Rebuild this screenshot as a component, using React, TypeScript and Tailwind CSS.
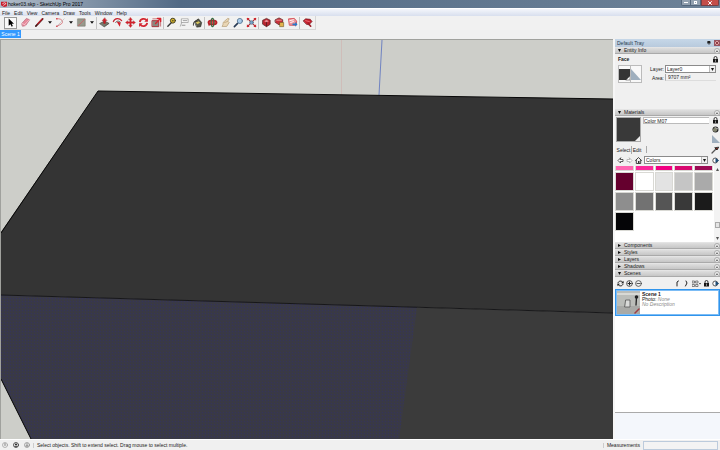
import React from "react";

type Kids = { children?: React.ReactNode };

function Icon({ children, className = "size-[11px]", box = "0 0 12 12" }: Kids & { className?: string; box?: string }) {
  return (
    <svg viewBox={box} className={`shrink-0 ${className}`} fill="none" strokeLinecap="round" strokeLinejoin="round" aria-hidden="true">
      {children}
    </svg>
  );
}

function Tool({ label, children, pressed }: Kids & { label: string; pressed?: boolean }) {
  return (
    <button
      aria-label={label}
      className={`flex h-3 w-[13px] shrink-0 items-center justify-center ${pressed ? "border border-[#999] bg-[#f9f9f9]" : ""}`}
    >
      <Icon>{children}</Icon>
    </button>
  );
}

function Drop({ label }: { label: string }) {
  return (
    <button aria-label={label} className="flex h-3 w-2 shrink-0 items-center justify-center">
      <Icon className="h-[3px] w-[4px]" box="0 0 5 3"><path d="M0 0h5L2.500 3z" fill="#111" /></Icon>
    </button>
  );
}

function Sep() {
  return <div className="mr-px h-3 w-px shrink-0 bg-[#c3c3c3]" />;
}

function Toolbar() {
  return (
    <div className="flex h-[14px] items-center bg-[#f1f1f1] pl-1">
      <div className="flex h-[14px] items-center border-r border-b border-[#d6d6d6] pr-px">
        <Tool label="Select" pressed>
          <path d="M4 1.500v8l2-1.700 1.300 2.700 1.300-.7-1.300-2.500h2.500z" fill="#000" />
        </Tool>
        <div className="w-[2px]" />
        <Tool label="Eraser">
          <path d="M2 7l5-5.500 3.500 1.500L6 9.500 3 10z" fill="#e78a9b" stroke="#a94c61" strokeWidth=".6" />
          <path d="M2 7l3 1.300L6 9.500M5 8.300L10.300 3" stroke="#fbd0d7" strokeWidth=".8" />
        </Tool>
        <div className="w-px" />
        <Tool label="Line">
          <path d="M2 10L9.500 2" stroke="#431313" strokeWidth="1.800" />
          <path d="M4 7.500L9 2" stroke="#c9202c" strokeWidth="1.200" />
        </Tool>
        <Drop label="Line tools" />
        <Tool label="Arc">
          <path d="M2 2c5-1 8 3 5 5.500L2.500 10" stroke="#cf5960" strokeWidth=".8" />
          <path d="M2 10L10 2" stroke="#b5aaaa" strokeWidth=".6" />
          <circle cx="2" cy="2" r=".8" fill="#d2232f" /><circle cx="2" cy="10" r=".8" fill="#d2232f" />
        </Tool>
        <Drop label="Arc tools" />
        <Tool label="Rectangle">
          <path d="M2 2h8v8H2z" fill="#98998b" stroke="#77786e" strokeWidth=".7" />
          <path d="M2.500 9.500l7-7" stroke="#c9656a" strokeWidth="1" />
        </Tool>
        <Drop label="Shape tools" />
        <Sep />
        <Tool label="Push/Pull">
          <path d="M1 7l5-2.500L11 7l-5 3.500z" fill="#77786b" stroke="#35352f" strokeWidth=".7" />
          <path d="M6 1L3.500 4H5v3h2V4h1.500z" fill="#d51d27" stroke="#8c1117" strokeWidth=".4" />
        </Tool>
        <Tool label="Offset">
          <path d="M1.500 5C3 1 8 .8 10.500 4" stroke="#c62531" strokeWidth="1.300" />
          <path d="M4 6c1-2 3.500-2 5-.5" stroke="#555" strokeWidth="1" />
          <path d="M5 5l4.500 1-1 4.500z" fill="#d2202b" />
        </Tool>
        <Tool label="Move">
          <path d="M6 .5l2 2.500H6.800v2.200H9V4l2.500 2L9 8V6.800H6.800V9H8l-2 2.500L4 9h1.200V6.800H3V8L.5 6 3 4v1.200h2.200V3H4z" fill="#d9222c" stroke="#99161e" strokeWidth=".3" />
        </Tool>
        <Tool label="Rotate">
          <path d="M2 5.500c.5-4 6-4.500 7.500-1.500M10 6.500c-.5 4-6 4.500-7.500 1.500" stroke="#d32631" strokeWidth="1.900" strokeLinecap="butt" />
          <path d="M10.800 1v4.300H6.900zM1.200 11V6.700h3.900z" fill="#d32631" />
        </Tool>
        <Tool label="Scale">
          <path d="M1.500 4h7v6.500h-7z" fill="#88887e" stroke="#a62a30" />
          <path d="M2 2h8.500v8" stroke="#b9484f" strokeWidth=".8" />
          <path d="M5 7l5-5M7 1.500h3.500V5" stroke="#d8232e" strokeWidth="1.500" />
        </Tool>
        <Sep />
        <Tool label="Tape Measure">
          <path d="M2 10l4-4" stroke="#333" strokeWidth="1.500" />
          <circle cx="7.500" cy="4" r="2.700" fill="#d6b52e" stroke="#3d3920" /><circle cx="7.500" cy="4" r=".8" fill="#3d3920" />
        </Tool>
        <Tool label="Text">
          <path d="M3 2h7v4H3zM3 6l-1.500 4" fill="#fff" stroke="#8d8d8d" strokeWidth=".7" />
          <path d="M4.500 4h4M3.500 9h3" stroke="#777" strokeWidth=".8" />
        </Tool>
        <Tool label="Paint Bucket">
          <path d="M3 5l4-3 3.500 4-1 4.500-4 .5z" fill="#55564b" stroke="#272721" strokeWidth=".7" />
          <path d="M1.500 9C1 4 5 3 7 6" stroke="#33332e" />
          <path d="M4 6l3-1.500 2 1.500-3 2z" fill="#d5c35b" />
        </Tool>
        <Sep />
        <Tool label="Orbit">
          <ellipse cx="6" cy="6" rx="4.500" ry="2.300" fill="#d8474e" stroke="#b82028" strokeWidth="1.800" />
          <ellipse cx="6" cy="6" rx="1.500" ry="4.500" stroke="#346b42" strokeWidth="1.200" />
          <path d="M1 7l3 1-2 2z" fill="#b82028" />
        </Tool>
        <Tool label="Pan">
          <path d="M2.500 10c2-2-.5-4 2.500-5.500L8.500 1.500 10 2 8.500 4.500 10 6 7.500 10z" fill="#ead7b6" stroke="#b69d76" strokeWidth=".8" />
          <path d="M5 6l3-1" stroke="#a98c66" strokeWidth=".6" />
        </Tool>
        <Tool label="Zoom">
          <path d="M1.500 10.500L5 7" stroke="#273a54" strokeWidth="1.800" />
          <circle cx="7.500" cy="4.300" r="2.800" fill="#a9cbea" stroke="#53718f" strokeWidth=".9" />
        </Tool>
        <Tool label="Zoom Extents">
          <path d="M1.500 1.500l9 9M10.500 1.500l-9 9" stroke="#a52c35" strokeWidth="1.200" />
          <path d="M1 1h3L1 4zM11 1v3L8 1zM1 11V8l3 3zM11 11H8l3-3z" fill="#d2212c" />
          <circle cx="6" cy="6" r="2" fill="#79a5c8" stroke="#44647e" strokeWidth=".6" />
        </Tool>
        <Sep />
        <Tool label="3D Warehouse">
          <path d="M2 3.500L6 1.500l4 2V8l-4 2.500L2 8z" fill="#b92630" stroke="#581b1e" strokeWidth=".8" />
          <path d="M3.500 4.500L6 3l2.500 1.500L6 6z" fill="#e78c92" /><path d="M6 6v4" stroke="#641c20" />
        </Tool>
        <Tool label="Share Model">
          <path d="M1.500 3l4-2 4 2v3l-4 2.500-4-2.500z" fill="#c9303a" stroke="#5d2022" strokeWidth=".8" />
          <path d="M3 3.500h5" stroke="#e99a9d" />
          <path d="M6.500 6h4v4.500h-4z" fill="#e2b44c" stroke="#775e26" strokeWidth=".7" />
        </Tool>
        <Tool label="Send to LayOut">
          <path d="M2 2l6-.5 2.500 3L10 9H3z" fill="#ec969b" stroke="#d3434c" strokeWidth=".9" />
          <path d="M3 4l4-1M4 6l3-1" stroke="#fff" />
          <path d="M6 7h3V5.500L11.500 8 9 10.500V9H6z" fill="#2878c8" />
        </Tool>
        <Sep />
        <Tool label="Extension Warehouse">
          <path d="M1.500 4L4 2l5 .5L11 5 7.500 8.500 5 8z" fill="#c61f2c" stroke="#671319" strokeWidth=".7" />
          <path d="M7 7l2.500 3" stroke="#9b2029" strokeWidth="1.800" /><path d="M4 4l4 1" stroke="#ec747c" />
        </Tool>
      </div>
    </div>
  );
}

function Model() {
  return (
    <svg viewBox="0 0 612 399" preserveAspectRatio="none" className="block h-full w-full" role="img" aria-label="3D model">
      <defs>
        <pattern id="dots" width="3" height="3" patternUnits="userSpaceOnUse">
          <rect width="3" height="3" fill="#393947" />
          <rect width="1" height="1" fill="#35345a" />
          <rect x="1" y="2" width="1" height="1" fill="#3b3b40" />
        </pattern>
      </defs>
      <rect width="612" height="399" fill="#cdcec9" />
      <path d="M340.500 0V55" stroke="#cfb9b5" strokeWidth=".8" />
      <path d="M381 0L378 55" stroke="#5870bf" strokeWidth=".8" />
      <path d="M97 51L612 59V273L0 255V192z" fill="#343434" />
      <path d="M0 255L612 273V399H30L0 339z" fill="#3b3b3b" />
      <path d="M0 255L416 267L398 399H30L0 339z" fill="url(#dots)" />
      <path d="M0 193L97 51L612 59M0 339L30 399" stroke="#080808" fill="none" />
      <path d="M0 255L612 273" stroke="#171719" />
    </svg>
  );
}

function Section({ title, open }: { title: string; open?: boolean }) {
  return (
    <h2 className="flex h-[7px] shrink-0 items-center border-y border-t-[#e4e4e4] border-b-[#aaa] bg-linear-to-b from-[#dedede] to-[#c6c6c6]">
      <button className="flex h-full flex-1 items-center gap-[3px] pl-[3px] text-left leading-[5px]" aria-expanded={!!open}>
        <Icon className="size-[3px]" box="0 0 4 4">
          <path d={open ? "M0 0h4L2 4z" : "M0 0l4 2-4 2z"} fill="#111" />
        </Icon>
        {title}
      </button>
      <button aria-label={`Close ${title}`} className="flex size-[6px] items-center justify-center rounded-full border border-[#aaa] bg-[#eee]">
        <Icon className="size-[2px]" box="0 0 2 2"><path d="M1 0l1 2H0z" fill="#555" /></Icon>
      </button>
    </h2>
  );
}

function Lock() {
  return (
    <Icon className="size-[7px]" box="0 0 7 7">
      <path d="M2 3V2a1.500 1.500 0 013 0v1" stroke="#222" strokeWidth=".9" />
      <path d="M1 3h5v3.500H1z" fill="#171717" /><path d="M3.500 4v1.500" stroke="#ddd" strokeWidth=".6" />
    </Icon>
  );
}

function Details() {
  return (
    <Icon className="size-[7px]" box="0 0 7 7">
      <circle cx="3.300" cy="3.500" r="2.500" fill="#fff" stroke="#333" strokeWidth=".8" />
      <path d="M3.500 1L7 3.500 3.500 6z" fill="#214f78" />
    </Icon>
  );
}

function Picker({ label, value, className }: { label: string; value: string; className: string }) {
  return (
    <span className={`grid h-[8px] items-center border border-[#8b8b8b] bg-white ${className}`}>
      <select aria-label={label} className="col-start-1 row-start-1 h-[6px] w-full appearance-none bg-transparent pl-px text-[5px] leading-[6px] outline-none">
        <option>{value}</option>
      </select>
      <span className="pointer-events-none col-start-1 row-start-1 flex h-[6px] w-[6px] items-center justify-center justify-self-end border-l border-[#bbb] bg-[#f1f1f1]">
        <Icon className="size-[3px]" box="0 0 4 4"><path d="M0 0h4L2 4z" fill="#111" /></Icon>
      </span>
    </span>
  );
}

function EntityInfo() {
  return (
    <section className="flex h-[55px] shrink-0 flex-col pr-px pl-[3px]">
      <div className="flex h-[10px] items-center justify-between font-bold">Face<Lock /></div>
      <div className="flex gap-2 pt-px pr-[2px]">
        <div className="flex h-[18px] w-6 items-center border border-[#bbb] bg-[#f8f8f8]">
          <Icon className="h-4 w-[22px]" box="0 0 22 16">
            <path d="M0 3h11v11H0z" fill="#353535" /><path d="M11 10v4H7z" fill="#fff" stroke="#333" strokeWidth=".5" />
            <path d="M12 3l10 11H12z" fill="#9fafbe" /><path d="M11.500 0v16" stroke="#bbb" />
          </Icon>
        </div>
        <div className="flex flex-1 flex-col gap-px pr-px">
          <div className="flex items-center gap-px">
            <span className="w-[14px] text-right">Layer:</span>
            <Picker label="Layer" value="Layer0" className="flex-1" />
          </div>
          <label className="flex items-center gap-px">
            <span className="w-[14px] text-right">Area:</span>
            <input readOnly value="9707 mm²" className="h-[7px] w-0 flex-1 border-b border-l border-[#aaa] border-b-[#ddd] bg-transparent pl-[2px] text-[5px] leading-[6px]" />
          </label>
        </div>
      </div>
    </section>
  );
}

const swatches: { name: string; fill: string }[] = [
  { name: "Pink 1", fill: "bg-[#ff65b1]" }, { name: "Pink 2", fill: "bg-[#fb2799]" },
  { name: "Pink 3", fill: "bg-[#f10082]" }, { name: "Pink 4", fill: "bg-[#d8086f]" },
  { name: "Pink 5", fill: "bg-[#9c0c55]" },
  { name: "Maroon", fill: "bg-[#65002e]" }, { name: "White", fill: "bg-white" },
  { name: "Gray 1", fill: "bg-[#e3e3e3]" }, { name: "Gray 2", fill: "bg-[#c5c5c5]" },
  { name: "Gray 3", fill: "bg-[#aaaaaa]" }, { name: "Gray 4", fill: "bg-[#8e8e8e]" },
  { name: "Gray 5", fill: "bg-[#727272]" }, { name: "Gray 6", fill: "bg-[#555555]" },
  { name: "Gray 7", fill: "bg-[#393939]" }, { name: "Gray 8", fill: "bg-[#1b1b1b]" },
  { name: "Black", fill: "bg-[#050507]" },
];

function Materials() {
  return (
    <section className="flex h-[126px] shrink-0 flex-col">
      <div className="flex h-[29px] gap-[2px] pt-px pl-px">
        <div className="flex size-[25px] items-end justify-end border border-[#aaa] bg-[#393939]">
          <Icon className="size-[5px]" box="0 0 5 5"><path d="M5 0v5H0z" fill="#eee" /></Icon>
        </div>
        <input aria-label="Material name" defaultValue="Color M07" className="h-[7px] w-0 flex-1 border border-r-0 border-[#bbb] bg-white text-[5px] leading-[5px]" />
        <div className="flex w-[9px] flex-col items-center gap-[2px]">
          <Lock />
          <Icon className="size-[7px]" box="0 0 7 7">
            <circle cx="3.500" cy="3.500" r="3" fill="#252525" /><path d="M1 3l2-1.500L5 3v2L3 6 1 5z" fill="#81836f" /><path d="M3 1.500L6 3" stroke="#eee" strokeWidth=".7" />
          </Icon>
          <Icon className="size-2" box="0 0 8 8"><path d="M0 0l8 8H0z" fill="#9fafbe" /></Icon>
        </div>
      </div>
      <div className="flex h-[9px] items-center pr-[1px]">
        <div role="tablist" className="flex flex-1 items-center pl-px">
          <button role="tab" aria-selected="true" className="h-2 w-4 border-r border-[#aaa]">Select</button>
          <button role="tab" aria-selected="false" className="h-[7px] w-[15px] border-r border-[#aaa] pr-1">Edit</button>
        </div>
        <button aria-label="Sample paint">
          <Icon className="size-2" box="0 0 8 8"><path d="M1 7l4-4" stroke="#555" strokeWidth="1.300" /><path d="M4 2l2 2 1.500-2.500z" fill="#832a21" stroke="#111" strokeWidth=".8" /></Icon>
        </button>
      </div>
      <div className="flex h-[12px] items-center gap-[2px] pr-px pl-[2px]">
        <button aria-label="Back"><Icon className="size-[7px]" box="0 0 7 7"><path d="M3.500 1L1 3.500 3.500 6V4.500H6v-2H3.500z" fill="#fff" stroke="#333" strokeWidth=".8" /></Icon></button>
        <button aria-label="Forward"><Icon className="size-[7px]" box="0 0 7 7"><path d="M3.500 1L6 3.500 3.500 6V4.500H1v-2h2.500z" fill="#fff" stroke="#aaa" strokeWidth=".8" /></Icon></button>
        <button aria-label="In model"><Icon className="size-[7px]" box="0 0 7 7"><path d="M.5 3.500l3-3 3 3M1.300 3v3.500h4.400V3" stroke="#333" strokeWidth=".9" /><path d="M3 4h1.500v2H3z" fill="#333" /></Icon></button>
        <Picker label="Material library" value="Colors" className="w-0 flex-1" />
        <button aria-label="Details" className="pl-[2px]"><Details /></button>
      </div>
      <div className="flex h-[76px] bg-white">
        <div className="flex flex-1 flex-col justify-end overflow-hidden pb-[11px]">
          <div className="grid grid-cols-5 gap-px pr-px">
            {swatches.map((s) => (
              <button key={s.name} aria-label={s.name} className={`h-[19px] border border-[#d9d9d4] ${s.fill}`} />
            ))}
          </div>
        </div>
        <div className="flex w-[6px] flex-col items-center justify-between bg-[#f3f3f3] py-[2px]">
          <Icon className="size-[3px]" box="0 0 4 4"><path d="M2 0l2 4H0z" fill="#555" /></Icon>
          <div className="flex-1" />
          <div className="mb-[9px] h-[6px] w-[5px] border border-[#aaa] bg-[#e5e5e5]" />
          <Icon className="size-[3px]" box="0 0 4 4"><path d="M0 0h4L2 4z" fill="#555" /></Icon>
        </div>
      </div>
    </section>
  );
}

function Scenes() {
  return (
    <section className="flex min-h-0 flex-1 flex-col">
      <div className="flex h-[12px] shrink-0 items-center gap-[2px] pr-px pl-[2px]">
        <button aria-label="Update scene"><Icon className="size-[7px]" box="0 0 7 7"><path d="M1 3C1 1 4.500 0 6 2.500M6 4C6 6 2.500 7 1 4.500" stroke="#222" /><path d="M6.500.8v2.400H4zM.5 6.200V3.800H3z" fill="#222" /></Icon></button>
        <button aria-label="Add scene"><Icon className="size-[7px]" box="0 0 7 7"><circle cx="3.500" cy="3.500" r="2.900" stroke="#333" strokeWidth=".8" /><path d="M2 3.500h3M3.500 2v3" stroke="#222" /></Icon></button>
        <button aria-label="Remove scene"><Icon className="size-[7px]" box="0 0 7 7"><circle cx="3.500" cy="3.500" r="2.900" stroke="#444" strokeWidth=".8" /><path d="M2 3.500h3" stroke="#333" strokeWidth=".8" /></Icon></button>
        <div className="flex-1" />
        <button aria-label="Move scene down"><Icon className="size-[7px]" box="0 0 7 7"><path d="M4.500 1L3 2v4" stroke="#222" /></Icon></button>
        <button aria-label="Move scene up"><Icon className="size-[7px]" box="0 0 7 7"><path d="M3 1l1 2-1.500 3" stroke="#222" /></Icon></button>
        <button aria-label="View options"><Icon className="h-[7px] w-[9px]" box="0 0 9 7"><path d="M.5 1h2v2h-2zM4 1h2v2H4zM.5 4.500h2v2h-2zM4 4.500h2v2H4z" stroke="#555" strokeWidth=".7" /><path d="M7 3h2L8 4.500z" fill="#222" /></Icon></button>
        <Lock />
        <button aria-label="Scene details"><Details /></button>
      </div>
      <div className="flex min-h-0 flex-1 flex-col bg-white">
        <button className="flex h-[27px] shrink-0 gap-[2px] border border-[#3094ec] bg-white p-px text-left outline outline-[#7cbcf5] -outline-offset-2">
          <Icon className="h-[23px] w-[23px]" box="0 0 23 23">
            <path d="M0 0h23v23H0z" fill="#bbbdb9" /><path d="M0 15h23v8H0z" fill="#a9aaa7" /><path d="M0 3h23" stroke="#d8d9d5" strokeWidth="2" />
            <path d="M9 9h4v7H8z" fill="#d9dad8" stroke="#555" strokeWidth=".8" />
            <circle cx="19.500" cy="6" r="1.800" fill="#222" /><path d="M19.500 6l-.5 8" stroke="#222" strokeWidth="1.300" /><path d="M18 22l4-4" stroke="#9b3d43" strokeWidth="1.500" />
          </Icon>
          <span className="flex flex-col pt-px leading-[5px]">
            <b>Scene 1</b>
            <span>Photo: <i className="text-[#888]">None</i></span>
            <i className="text-[#888]">No Description</i>
          </span>
        </button>
      </div>
      <div className="h-[27px] shrink-0 border-t border-[#aaa] bg-[#f4f7fc]" />
    </section>
  );
}

function Tray() {
  return (
    <aside className="flex w-[105px] shrink-0 flex-col bg-[#f0f0f0] leading-[6px]">
      <header className="flex h-2 shrink-0 items-center bg-linear-to-b from-[#c6d7e8] to-[#b8cadd] pl-[2px] text-[#26384c]">
        <h1 className="flex-1">Default Tray</h1>
        <button aria-label="Pin tray" className="px-[3px]"><Icon className="size-1" box="0 0 4 4"><path d="M1 0h2v2H1zM0 2h4M2 2v2" fill="#222" stroke="#222" strokeWidth=".6" /></Icon></button>
        <button aria-label="Close tray" className="flex size-[6px] items-center justify-center border border-[#975560] bg-[#d9a3a4]"><Icon className="size-1" box="0 0 4 4"><path d="M.5.5l3 3M3.500.5l-3 3" stroke="#7d222d" strokeWidth=".8" /></Icon></button>
      </header>
      <Section title="Entity Info" open />
      <EntityInfo />
      <Section title="Materials" open />
      <Materials />
      <Section title="Components" />
      <Section title="Styles" />
      <Section title="Layers" />
      <Section title="Shadows" />
      <Section title="Scenes" open />
      <Scenes />
    </aside>
  );
}

const menus = ["File", "Edit", "View", "Camera", "Draw", "Tools", "Window", "Help"];

export default function App() {
  return (
    <div className="flex h-screen w-full flex-col overflow-hidden bg-[#f0f0f0] font-['Liberation_Sans',sans-serif] text-[5px] leading-[6px] text-[#202020]">
      <header className="flex h-2 shrink-0 items-center bg-linear-to-r from-[#b2bdc9] via-[#526a85] via-25% to-[#6d8297]">
        <Icon className="mx-px size-[6px]" box="0 0 7 7"><path d="M0 1h7v5L3.500 7 0 5z" fill="#c71c2b" /><path d="M2 3l2-1 2 1-3 2" stroke="#fff" strokeWidth=".8" /></Icon>
        <span className="flex-1 text-black">hoker03.skp - SketchUp Pro 2017</span>
        <div className="flex h-[6px] self-start text-white">
          <button aria-label="Minimize" className="flex w-[10px] items-center justify-center rounded-bl-[2px] border border-t-0 border-[#53667b] bg-[#92a1b0]"><span className="h-px w-1 bg-white" /></button>
          <button aria-label="Restore" className="flex w-[10px] items-center justify-center border-r border-b border-[#53667b] bg-[#92a1b0]"><span className="size-[3px] border border-white" /></button>
          <button aria-label="Close" className="mr-px flex w-[18px] items-center justify-center rounded-br-[2px] border border-t-0 border-[#793e42] bg-[#c44e49]"><Icon className="size-1" box="0 0 4 4"><path d="M.5.5l3 3M3.500.5l-3 3" stroke="#fff" /></Icon></button>
        </div>
      </header>
      <nav className="flex h-2 shrink-0 items-center gap-1 border-t border-white bg-linear-to-b from-[#f4f6fb] to-[#d8dfee] pl-[2px]">
        {menus.map((m) => (
          <button key={m} className="leading-[6px]"><span className="underline decoration-[#777]">{m[0]}</span>{m.slice(1)}</button>
        ))}
      </nav>
      <Toolbar />
      <div className="flex h-[9px] shrink-0 items-start">
        <button className="h-2 w-[21px] bg-[#3399ff] text-white">Scene 1</button>
      </div>
      <div className="flex min-h-0 flex-1">
        <main className="min-w-0 flex-1 overflow-hidden border-t border-l border-[#a0a19d]"><Model /></main>
        <div className="w-[2px] shrink-0 bg-[#f6f6f6]" />
        <Tray />
      </div>
      <footer className="flex h-[11px] shrink-0 items-center border-t border-white bg-[#f0f0f0] pl-[2px]">
        <div className="flex items-center gap-[5px]">
          <Icon className="size-[6px]" box="0 0 6 6"><circle cx="3" cy="3" r="2.500" stroke="#999" strokeWidth=".7" /><path d="M3 1.500v2" stroke="#666" strokeWidth=".8" /></Icon>
          <Icon className="size-[6px]" box="0 0 6 6"><circle cx="3" cy="3" r="2.500" stroke="#333" strokeWidth=".8" /><circle cx="3" cy="2.500" r="1" fill="#222" /><path d="M2 4.500h2" stroke="#222" strokeWidth=".7" /></Icon>
          <Icon className="size-[6px]" box="0 0 6 6"><circle cx="3" cy="3" r="2.500" stroke="#888" strokeWidth=".7" /><path d="M2 4h2M3 1.500V4" stroke="#666" strokeWidth=".7" /></Icon>
        </div>
        <div className="mx-[3px] h-[5px] w-px bg-[#ccc]" />
        <span className="flex-1">Select objects. Shift to extend select. Drag mouse to select multiple.</span>
        <div className="mr-[3px] h-[5px] w-px bg-[#ccc]" />
        <label className="flex items-center gap-[3px] pr-[2px]">
          Measurements
          <input className="h-[9px] w-[75px] border border-[#bccbdc] bg-[#f3f3f3] text-[5px]" />
        </label>
      </footer>
    </div>
  );
}
